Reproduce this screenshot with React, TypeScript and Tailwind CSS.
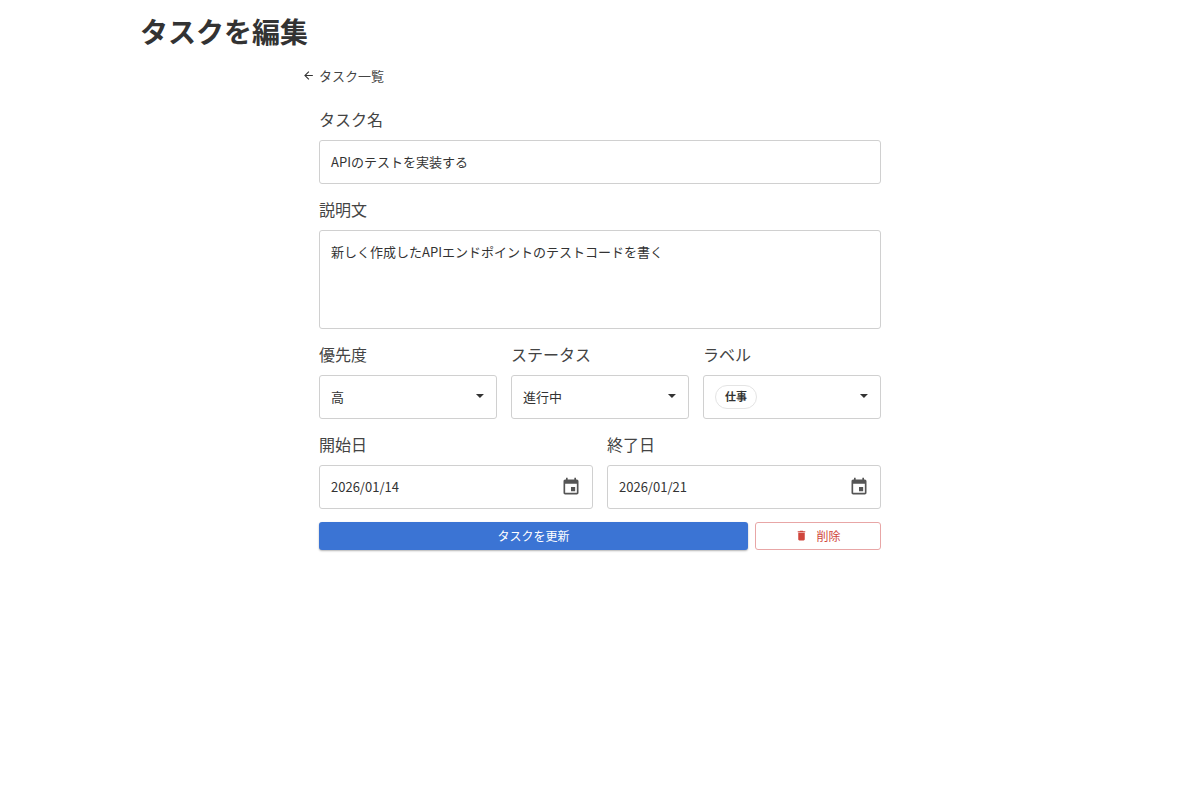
import React from "react";

const font = { fontFamily: '"Noto Sans CJK JP", Roboto, sans-serif' };

function Caret() {
  return (
    <svg width="10" height="5" viewBox="0 0 10 5" className="shrink-0">
      <path d="M0 0 L10 0 L5 5 Z" fill="#333" transform="scale(0.8) translate(1.2 0)" />
    </svg>
  );
}

function Calendar() {
  return (
    <svg width="20" height="20" viewBox="0 0 24 24" fill="#555">
      <path d="M17 12h-5v5h5v-5zM16 1v2H8V1H6v2H5c-1.11 0-1.99.9-1.99 2L3 19c0 1.1.89 2 2 2h14c1.1 0 2-.9 2-2V5c0-1.1-.9-2-2-2h-1V1h-2zm3 18H5V8h14v11z" />
    </svg>
  );
}

export default function App() {
  const box = "h-[44px] border border-[#d0d0d0] rounded-[3px] bg-white flex items-center px-[11px] text-[13px] text-[#333]";
  const label = "text-[16px] text-[#444] mb-[10px] leading-[22px]";
  return (
    <div className="min-h-[809px] bg-white text-[#333]" style={font}>
      <h1 className="pl-[140px] pt-[12px] text-[28px] font-bold leading-[38px] text-[#333]">タスクを編集</h1>
      <div className="pl-[302px] mt-[16px] flex items-center gap-[4px] text-[13px] text-[#444]">
        <svg width="13" height="13" viewBox="0 0 24 24" fill="#333">
          <path d="M20 11H7.83l5.59-5.59L12 4l-8 8 8 8 1.41-1.41L7.83 13H20v-2z" />
        </svg>
        タスク一覧
      </div>
      <div className="ml-[319px] w-[562px] mt-[22px] flex flex-col">
        <div className={label}>タスク名</div>
        <div className={box}>APIのテストを実装する</div>
        <div className={label + " mt-[14px]"}>説明文</div>
        <div className={box.replace("h-[44px]", "h-[99px]").replace("items-center", "items-start") + " pt-[11px]"}>
          新しく作成したAPIエンドポイントのテストコードを書く
        </div>
        <div className="grid grid-cols-3 gap-[14px] mt-[14px]">
          <div>
            <div className={label}>優先度</div>
            <div className={box + " justify-between"}>高<Caret /></div>
          </div>
          <div>
            <div className={label}>ステータス</div>
            <div className={box + " justify-between"}>進行中<Caret /></div>
          </div>
          <div>
            <div className={label}>ラベル</div>
            <div className={box + " justify-between border-[#3b74d4] px-[10px]"}>
              <span className="border border-[#e4e4e4] rounded-full px-[9px] h-[24px] flex items-center text-[11px] font-bold">仕事</span>
              <Caret />
            </div>
          </div>
        </div>
        <div className="grid grid-cols-2 gap-[14px] mt-[14px]">
          <div>
            <div className={label}>開始日</div>
            <div className={box + " justify-between"}>2026/01/14<Calendar /></div>
          </div>
          <div>
            <div className={label}>終了日</div>
            <div className={box + " justify-between"}>2026/01/21<Calendar /></div>
          </div>
        </div>
        <div className="flex gap-[7px] mt-[13px]">
          <button className="flex-1 h-[28px] bg-[#3b74d4] text-white text-[12px] rounded-[3px] shadow-[0_1px_2px_rgba(0,0,0,0.3)]">
            タスクを更新
          </button>
          <button className="w-[126px] h-[28px] border border-[#e8a6a6] text-[#d0463c] text-[12px] rounded-[3px] flex items-center justify-center gap-[8px]">
            <svg width="13" height="13" viewBox="0 0 24 24" fill="#d0463c">
              <path d="M6 19c0 1.1.9 2 2 2h8c1.1 0 2-.9 2-2V7H6v12zM19 4h-3.5l-1-1h-5l-1 1H5v2h14V4z" />
            </svg>
            削除
          </button>
        </div>
      </div>
    </div>
  );
}
